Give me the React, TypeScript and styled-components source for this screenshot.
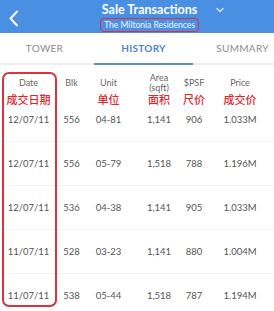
import styled, { createGlobalStyle } from "styled-components";

const GlobalStyle = createGlobalStyle`
  body {
    margin: 0;
    background: #fff;
    font-family: Lato, "Noto Sans CJK SC", sans-serif;
  }
`;

const columns = "57px 29px 45px 56px 14px 78px";

const Screen = styled.div`
  width: 274px;
  height: 311px;
  overflow: hidden;
  background: #fff;
`;

const NavBar = styled.header`
  height: 33px;
  background: #4a90e2;
  display: flex;
  align-items: flex-start;
`;

const BackButton = styled.div`
  width: 89px;
  flex: none;
  padding: 10px 0 0 8px;
  display: flex;
`;

const TitleBlock = styled.div`
  width: 105px;
  flex: none;
  display: flex;
  flex-direction: column;
  align-items: center;
  padding-top: 3px;
`;

const Title = styled.div`
  color: #fff;
  font-weight: 700;
  font-size: 12.5px;
  line-height: 14px;
`;

const Subtitle = styled.div`
  margin-top: 1px;
  color: #f2f7ff;
  font-size: 8.5px;
  line-height: 10px;
  padding: 1px 3px;
  border: 1.5px solid #d8304a;
  border-radius: 4px;
  white-space: nowrap;
`;

const Dropdown = styled.div`
  margin: 7px 0 0 14px;
  display: flex;
`;

const TabBar = styled.nav`
  display: flex;
  margin-left: -5px;
  height: 30px;
  border-bottom: 2px solid #ededed;
`;

const Tab = styled.div<{ $active?: boolean }>`
  width: 99px;
  flex: none;
  display: flex;
  align-items: center;
  justify-content: center;
  font-size: 10px;
  letter-spacing: 0.3px;
  color: ${(p) => (p.$active ? "#4f86c4" : "#8c8c8c")};
  font-weight: ${(p) => (p.$active ? 700 : 400)};
  border-bottom: 2px solid ${(p) => (p.$active ? "#5a8ec8" : "transparent")};
  margin-bottom: -2px;
`;

const Table = styled.section`
  position: relative;
`;

const HeadRow = styled.div`
  display: grid;
  grid-template-columns: ${columns};
  justify-items: center;
  align-items: center;
  height: 30px;
  padding-top: 3px;
`;

const HeadLabel = styled.div`
  color: #666;
  font-size: 9px;
  line-height: 10px;
  text-align: center;
  white-space: nowrap;
`;

const NoteRow = styled.div`
  display: grid;
  grid-template-columns: ${columns};
  justify-items: center;
  align-items: start;
  height: 0;
  margin-top: -4px;
  margin-bottom: 4px;
`;

const Note = styled.div`
  color: #e0262d;
  font-weight: 500;
  font-size: 11px;
  line-height: 12px;
  white-space: nowrap;
`;

const Row = styled.div`
  display: grid;
  grid-template-columns: ${columns};
  justify-items: center;
  align-items: center;
  height: 44px;
  border-bottom: 1px solid #f3f3f3;
  box-sizing: border-box;
`;

const Cell = styled.div`
  color: #555;
  font-size: 9.5px;
  white-space: nowrap;
`;

const Highlight = styled.div`
  position: absolute;
  left: 2px;
  top: 7px;
  width: 55px;
  height: 235px;
  box-sizing: border-box;
  border: 2px solid #d8333f;
  border-radius: 7px;
  pointer-events: none;
`;

const rows = [
  ["12/07/11", "556", "04-81", "1,141", "906", "1.033M"],
  ["12/07/11", "556", "05-79", "1,518", "788", "1.196M"],
  ["12/07/11", "536", "04-38", "1,141", "905", "1.033M"],
  ["11/07/11", "528", "03-23", "1,141", "880", "1.004M"],
  ["11/07/11", "538", "05-44", "1,518", "787", "1.194M"],
];

export default function App() {
  return (
    <Screen>
      <GlobalStyle />
      <NavBar>
        <BackButton>
          <svg width="11" height="17" viewBox="0 0 11 17">
            <path d="M9 1.5 L2.5 8.5 L9 15.5" fill="none" stroke="#fff" strokeWidth="2" strokeLinecap="round" strokeLinejoin="round" />
          </svg>
        </BackButton>
        <TitleBlock>
          <Title>Sale Transactions</Title>
          <Subtitle>The Miltonia Residences</Subtitle>
        </TitleBlock>
        <Dropdown>
          <svg width="8" height="6" viewBox="0 0 8 6">
            <path d="M1 1.5 L4 4.5 L7 1.5" fill="none" stroke="#cfe1f7" strokeWidth="1.5" strokeLinecap="round" />
          </svg>
        </Dropdown>
      </NavBar>
      <TabBar>
        <Tab>TOWER</Tab>
        <Tab $active>HISTORY</Tab>
        <Tab>SUMMARY</Tab>
      </TabBar>
      <Table>
        <HeadRow>
          <HeadLabel>Date</HeadLabel>
          <HeadLabel>Blk</HeadLabel>
          <HeadLabel>Unit</HeadLabel>
          <HeadLabel>
            Area
            <br />
            (sqft)
          </HeadLabel>
          <HeadLabel>$PSF</HeadLabel>
          <HeadLabel>Price</HeadLabel>
        </HeadRow>
        <NoteRow>
          <Note>成交日期</Note>
          <span />
          <Note>单位</Note>
          <Note>面积</Note>
          <Note>尺价</Note>
          <Note>成交价</Note>
        </NoteRow>
        {rows.map((r, i) => (
          <Row key={i}>
            {r.map((v, j) => (
              <Cell key={j}>{v}</Cell>
            ))}
          </Row>
        ))}
        <Highlight />
      </Table>
    </Screen>
  );
}
